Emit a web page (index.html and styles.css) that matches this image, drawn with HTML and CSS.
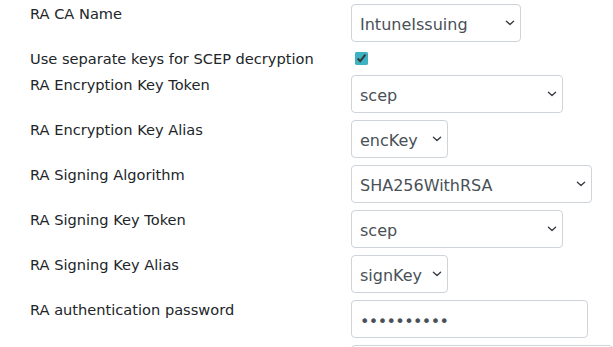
FILE: index.html
```html
<!DOCTYPE html>
<html>
<head>
<meta charset="utf-8">
<link rel="stylesheet" href="styles.css">
</head>
<body>
<form class="form">
  <div class="row">
    <label class="lbl">RA CA Name</label>
    <select class="ctl w170"><option>IntuneIssuing</option></select>
  </div>
  <div class="row row-check">
    <label class="lbl lbl-check">Use separate keys for SCEP decryption</label>
    <input type="checkbox" class="chk" checked>
  </div>
  <div class="row">
    <label class="lbl">RA Encryption Key Token</label>
    <select class="ctl w212"><option>scep</option></select>
  </div>
  <div class="row">
    <label class="lbl">RA Encryption Key Alias</label>
    <select class="ctl w97"><option>encKey</option></select>
  </div>
  <div class="row">
    <label class="lbl">RA Signing Algorithm</label>
    <select class="ctl w241"><option>SHA256WithRSA</option></select>
  </div>
  <div class="row">
    <label class="lbl">RA Signing Key Token</label>
    <select class="ctl w212"><option>scep</option></select>
  </div>
  <div class="row">
    <label class="lbl">RA Signing Key Alias</label>
    <select class="ctl w97"><option>signKey</option></select>
  </div>
  <div class="row">
    <label class="lbl">RA authentication password</label>
    <input type="password" class="ctl txt pwd w237" value="foo123bar4">
  </div>
  <div class="row">
    <label class="lbl">&nbsp;</label>
    <input type="text" class="ctl txt w300" value="">
  </div>
</form>
</body>
</html>
```
FILE: styles.css
```css
html, body {
  margin: 0;
  padding: 0;
  background: #fff;
}
body {
  font-family: "DejaVu Sans", Verdana, sans-serif;
  color: #212529;
  overflow: hidden;
}
.form {
  display: flex;
  flex-direction: column;
  gap: 7px;
  padding: 4px 0 0 30px;
}
.row {
  display: flex;
  align-items: flex-start;
  height: 38px;
}
.row-check {
  height: 19px;
  align-items: center;
}
.lbl {
  flex: 0 0 321px;
  font-size: 14.6px;
  line-height: 17px;
  padding-top: 1px;
  white-space: nowrap;
}
.lbl-check {
  padding-top: 0;
}
.ctl {
  box-sizing: border-box;
  height: 38px;
  font-family: "DejaVu Sans", Verdana, sans-serif;
  font-size: 16px;
  line-height: 24px;
  color: #495057;
  background-color: #fff;
  border: 1px solid #ced4da;
  border-radius: 4px;
  padding: 8px 18px 4px 8px;
  margin: 0;
  -webkit-appearance: none;
  appearance: none;
  outline: none;
}
select.ctl {
  background-image: url("data:image/svg+xml;utf8,<svg xmlns='http://www.w3.org/2000/svg' width='10' height='6' viewBox='0 0 10 6'><path d='M1.4 1.2 L5 4.5 L8.6 1.2' fill='none' stroke='%23343a40' stroke-width='1.3' stroke-linecap='round' stroke-linejoin='round'/></svg>");
  background-repeat: no-repeat;
  background-position: right 5px center;
  background-size: 10px 6px;
}
.txt {
  padding-right: 8px;
}
.pwd {
  letter-spacing: -0.6px;
}
.chk {
  width: 13px;
  height: 13px;
  margin: 0 0 0 4px;
  accent-color: #3bb3c3;
}
.w170 { width: 170px; }
.w212 { width: 212px; }
.w97 { width: 97px; }
.w241 { width: 241px; }
.w237 { width: 237px; }
.w300 { width: 300px; }
```
